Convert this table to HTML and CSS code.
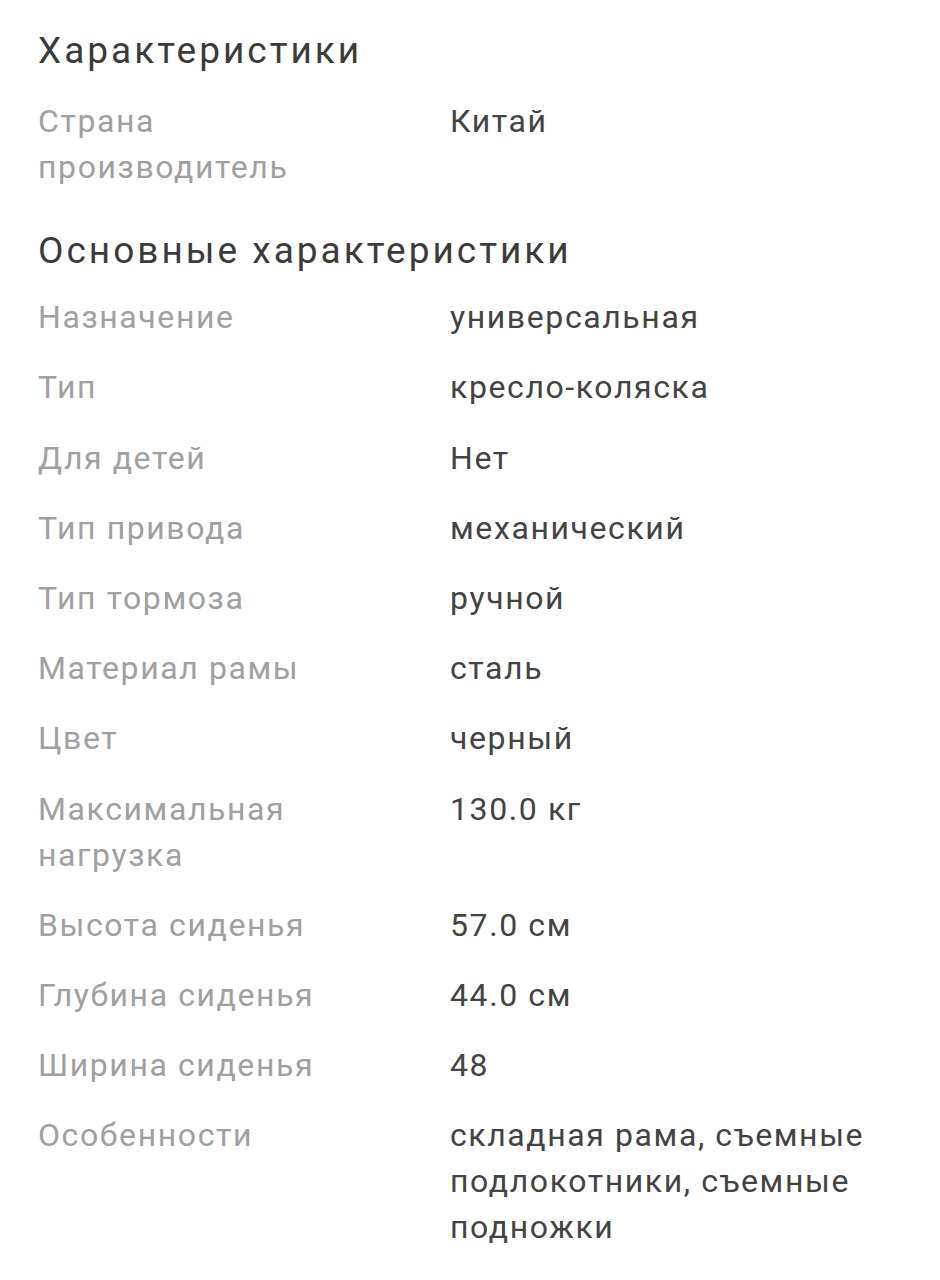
FILE: index.html
```html
<!DOCTYPE html>
<html lang="ru">
<head>
<meta charset="utf-8">
<link rel="stylesheet" href="styles.css">
</head>
<body>
<main class="specs">
  <section class="group">
    <h2 class="group-title first">Характеристики</h2>
    <dl class="list">
      <div class="row"><dt>Страна производитель</dt><dd>Китай</dd></div>
    </dl>
  </section>
  <section class="group">
    <h2 class="group-title second">Основные характеристики</h2>
    <dl class="list">
      <div class="row"><dt>Назначение</dt><dd>универсальная</dd></div>
      <div class="row"><dt>Тип</dt><dd>кресло-коляска</dd></div>
      <div class="row"><dt>Для детей</dt><dd>Нет</dd></div>
      <div class="row"><dt>Тип привода</dt><dd>механический</dd></div>
      <div class="row"><dt>Тип тормоза</dt><dd>ручной</dd></div>
      <div class="row"><dt>Материал рамы</dt><dd>сталь</dd></div>
      <div class="row"><dt>Цвет</dt><dd>черный</dd></div>
      <div class="row"><dt>Максимальная нагрузка</dt><dd>130.0 кг</dd></div>
      <div class="row"><dt>Высота сиденья</dt><dd>57.0 см</dd></div>
      <div class="row"><dt>Глубина сиденья</dt><dd>44.0 см</dd></div>
      <div class="row"><dt>Ширина сиденья</dt><dd>48</dd></div>
      <div class="row"><dt>Особенности</dt><dd>складная рама, съемные подлокотники, съемные подножки</dd></div>
    </dl>
  </section>
</main>
</body>
</html>
```
FILE: styles.css
```css
html, body {
  margin: 0;
  padding: 0;
  background: #ffffff;
}
body {
  font-family: Roboto, "Noto Sans", sans-serif;
  -webkit-font-smoothing: antialiased;
}
.specs {
  padding: 28px 38px 0 38px;
}
.group-title {
  margin: 0;
  font-size: 37px;
  line-height: 46px;
  letter-spacing: 3px;
  font-weight: 400;
  color: #3b3b3b;
}
.group-title.first {
  margin-bottom: 12px;
}
.group-title.second {
  margin-top: 26px;
  margin-bottom: 8px;
}
.list {
  margin: 0;
}
.row {
  display: grid;
  grid-template-columns: 412px 1fr;
  padding: 12px 0 12.2px;
  font-size: 32px;
  line-height: 46px;
  letter-spacing: 1.6px;
}
.row dt {
  color: #a0a0a0;
  padding-right: 80px;
}
.row dd {
  margin: 0;
  color: #434343;
}
```
